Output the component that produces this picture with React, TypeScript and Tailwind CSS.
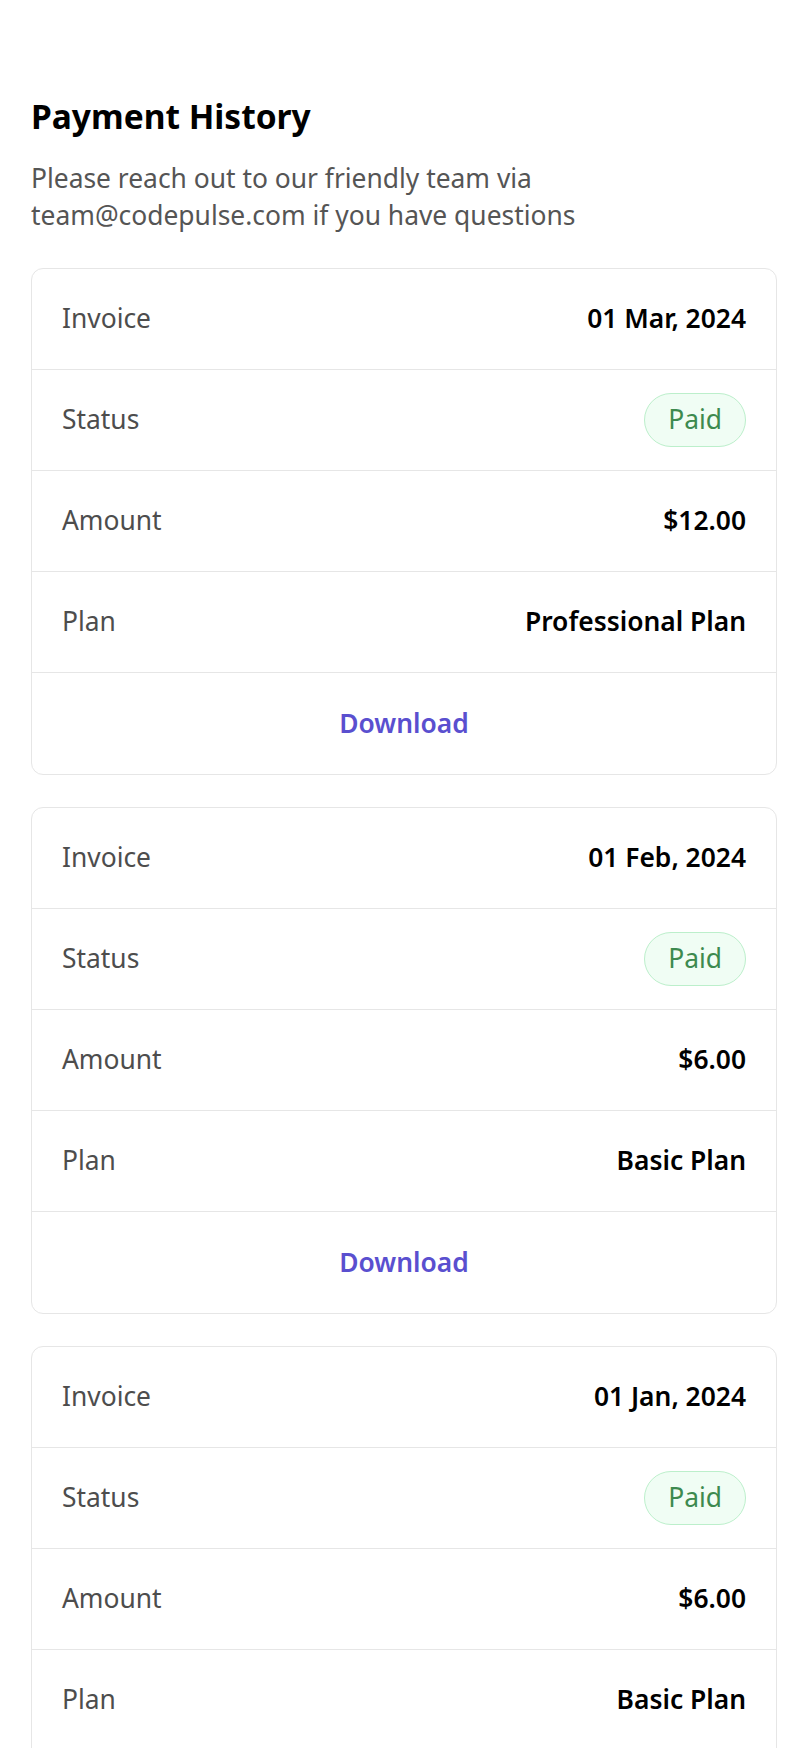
import React from "react";

type Invoice = { date: string; amount: string; plan: string };

const invoices: Invoice[] = [
  { date: "01 Mar, 2024", amount: "$12.00", plan: "Professional Plan" },
  { date: "01 Feb, 2024", amount: "$6.00", plan: "Basic Plan" },
  { date: "01 Jan, 2024", amount: "$6.00", plan: "Basic Plan" },
];

function Row({ label, children }: { label: string; children: React.ReactNode }) {
  return (
    <div className="flex h-[101px] items-center justify-between border-b border-[#e6e6e6] px-[30px]">
      <span className="text-[#4d4d4d]">{label}</span>
      {children}
    </div>
  );
}

function Card({ inv }: { inv: Invoice }) {
  return (
    <div className="overflow-hidden rounded-[12px] border border-[#e6e6e6] bg-white">
      <Row label="Invoice">
        <span className="font-semibold text-black">{inv.date}</span>
      </Row>
      <Row label="Status">
        <span className="inline-flex h-[54px] items-center rounded-full border border-[#bcefcb] bg-[#f0fdf4] px-[23px] text-[#3d8a4f]">
          Paid
        </span>
      </Row>
      <Row label="Amount">
        <span className="font-semibold text-black">{inv.amount}</span>
      </Row>
      <Row label="Plan">
        <span className="font-semibold text-black">{inv.plan}</span>
      </Row>
      <div className="flex h-[101px] items-center justify-center">
        <button className="font-semibold text-[#5a4fcf]">Download</button>
      </div>
    </div>
  );
}

export default function App() {
  return (
    <div
      className="min-h-screen bg-white px-[31px] pt-[96px] pb-[40px] text-[26.4px]"
      style={{ fontFamily: '"Noto Sans", "Open Sans", sans-serif' }}
    >
      <h1 className="text-[33.5px] font-bold leading-[40px] text-black">Payment History</h1>
      <p className="mt-[24px] leading-[37.4px] text-[#555555]">
        Please reach out to our friendly team via
        <br />
        team@codepulse.com if you have questions
      </p>
      <div className="mt-[33px] flex flex-col gap-[32px]">
        {invoices.map((inv) => (
          <Card key={inv.date} inv={inv} />
        ))}
      </div>
    </div>
  );
}
